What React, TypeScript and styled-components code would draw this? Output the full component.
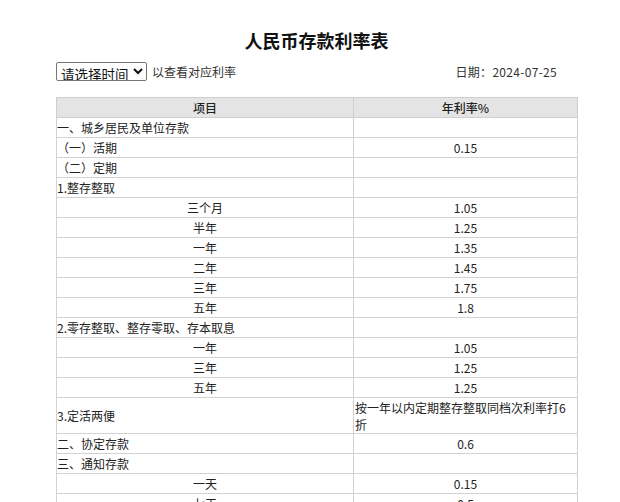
import React from "react";
import styled, { createGlobalStyle } from "styled-components";

const Global = createGlobalStyle`
  html, body { margin: 0; padding: 0; background: #fff; }
  body { font-family: "Noto Sans CJK SC", "Noto Sans", sans-serif; color: #222; }
`;

const Page = styled.div`
  width: 521px;
  margin-left: 56px;
  padding-top: 27px;
`;

const Title = styled.h1`
  margin: 0;
  text-align: center;
  font-size: 18px;
  line-height: 26px;
  font-weight: 700;
  color: #111;
`;

const Toolbar = styled.div`
  display: flex;
  align-items: center;
  justify-content: space-between;
  margin-top: 8px;
  height: 20px;
`;

const Left = styled.div`
  display: flex;
  align-items: center;
  gap: 5px;
`;

const Select = styled.select`
  font-family: inherit;
  font-size: 13.5px;
  height: 19px;
  width: 91px;
  padding: 0;
  border: 1px solid #767676;
  border-radius: 2px;
  background: #fff;
  color: #111;
  line-height: 17px;
`;

const Hint = styled.span`
  font-size: 12px;
  color: #333;
`;

const DateText = styled.span`
  font-size: 12px;
  color: #333;
  margin-right: 20px;
  letter-spacing: 0.3px;
`;

const Table = styled.table`
  margin-top: 16px;
  width: 521px;
  border-collapse: collapse;
  table-layout: fixed;
  font-size: 12px;
  color: #222;
`;

const Th = styled.th`
  background: #e4e4e4;
  border: 1px solid #cfcfcf;
  height: 19px;
  padding: 0;
  line-height: 19px;
  font-weight: 500;
  font-size: 12px;
  color: #222;
`;

const Td = styled.td<{ $align?: "left" | "center" }>`
  border: 1px solid #d2d2d2;
  height: 19px;
  padding: 0;
  line-height: 19px;
  text-align: ${(p) => p.$align || "center"};
  vertical-align: middle;
`;

const WrapTd = styled(Td)`
  line-height: 17px;
  padding: 1px 0 0 1px;
`;

type Row = { label: string; value?: string; center?: boolean; wrap?: boolean };

const rows: Row[] = [
  { label: "一、城乡居民及单位存款" },
  { label: "（一）活期", value: "0.15" },
  { label: "（二）定期" },
  { label: "1.整存整取" },
  { label: "三个月", value: "1.05", center: true },
  { label: "半年", value: "1.25", center: true },
  { label: "一年", value: "1.35", center: true },
  { label: "二年", value: "1.45", center: true },
  { label: "三年", value: "1.75", center: true },
  { label: "五年", value: "1.8", center: true },
  { label: "2.零存整取、整存零取、存本取息" },
  { label: "一年", value: "1.05", center: true },
  { label: "三年", value: "1.25", center: true },
  { label: "五年", value: "1.25", center: true },
  { label: "3.定活两便", value: "按一年以内定期整存整取同档次利率打6折", wrap: true },
  { label: "二、协定存款", value: "0.6" },
  { label: "三、通知存款" },
  { label: "一天", value: "0.15", center: true },
  { label: "七天", value: "0.5", center: true },
];

export default function App() {
  return (
    <>
      <Global />
      <Page>
        <Title>人民币存款利率表</Title>
        <Toolbar>
          <Left>
            <Select defaultValue="">
              <option value="">请选择时间</option>
              <option value="2024-07-25">2024-07-25</option>
            </Select>
            <Hint>以查看对应利率</Hint>
          </Left>
          <DateText>日期：2024-07-25</DateText>
        </Toolbar>
        <Table>
          <colgroup>
            <col style={{ width: 297 }} />
            <col style={{ width: 224 }} />
          </colgroup>
          <thead>
            <tr>
              <Th>项目</Th>
              <Th>年利率%</Th>
            </tr>
          </thead>
          <tbody>
            {rows.map((r, i) => (
              <tr key={i}>
                <Td $align={r.center ? "center" : "left"}>{r.label}</Td>
                {r.wrap ? (
                  <WrapTd $align="left">{r.value}</WrapTd>
                ) : (
                  <Td>{r.value ?? ""}</Td>
                )}
              </tr>
            ))}
          </tbody>
        </Table>
      </Page>
    </>
  );
}
